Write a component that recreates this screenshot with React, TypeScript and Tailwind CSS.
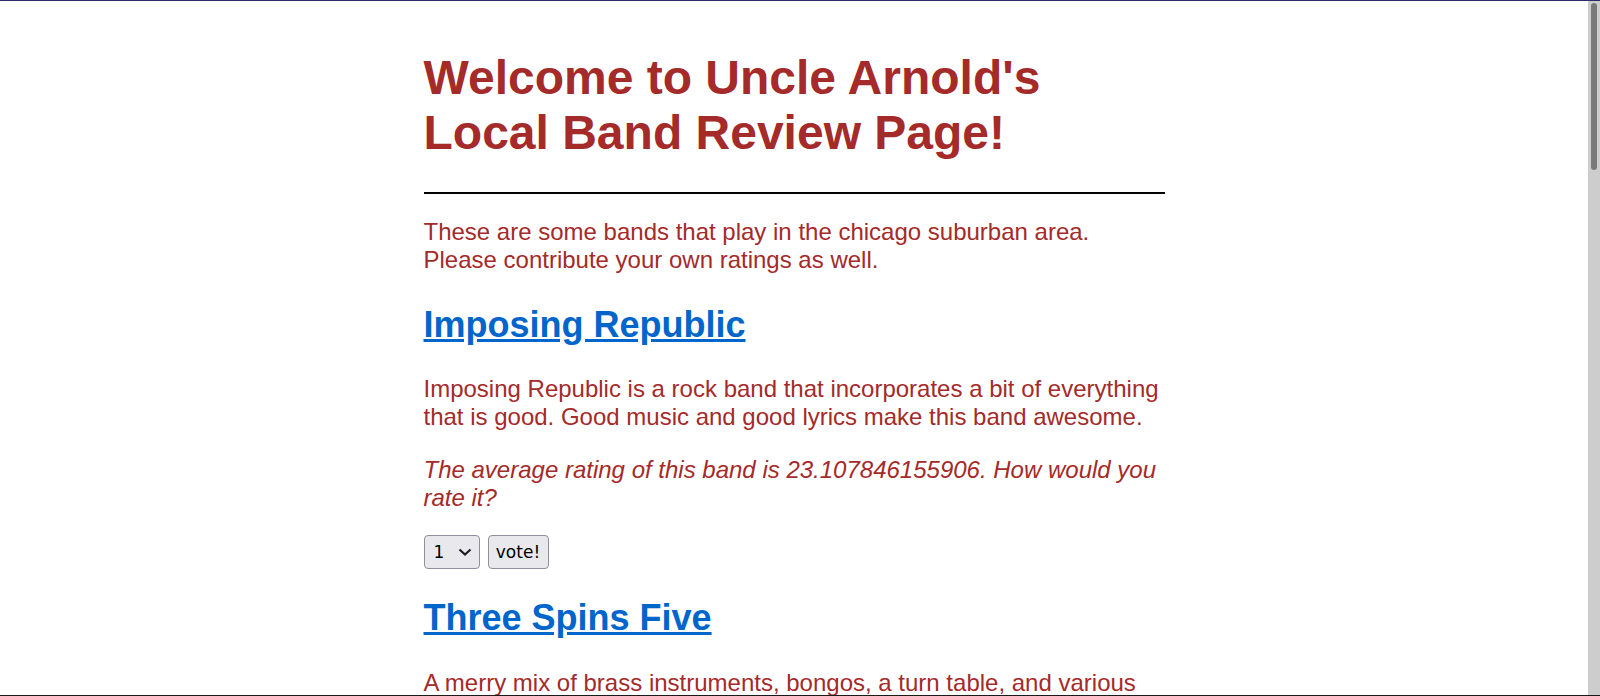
const bands = [
  {
    name: "Imposing Republic",
    about:
      "Imposing Republic is a rock band that incorporates a bit of everything that is good. Good music and good lyrics make this band awesome.",
    rating: "23.107846155906",
  },
  {
    name: "Three Spins Five",
    about:
      "A merry mix of brass instruments, bongos, a turn table, and various other odds and ends come together to make one very unique sound.",
    rating: "4.5833333333333",
  },
  {
    name: "The Lakeshore Drifters",
    about:
      "Folk and bluegrass from the north shore. Banjos, fiddles and a washboard that never seems to quit.",
    rating: "7.2142857142857",
  },
  {
    name: "Naperville Noise Machine",
    about:
      "Loud guitars and louder drums. If you like your ears ringing for a day or two, go see these guys live.",
    rating: "5.9166666666667",
  },
  {
    name: "Sunday Brunch Quartet",
    about:
      "Smooth jazz standards played at just the right volume for a long lazy morning with good coffee.",
    rating: "8.0714285714286",
  },
  {
    name: "Metra Delay",
    about:
      "A punk trio that writes songs about waiting for the train. Short, fast and surprisingly catchy.",
    rating: "6.3529411764706",
  },
  {
    name: "Prairie Static",
    about:
      "Electronic beats mixed with old radio recordings. Strange at first, but it grows on you quickly.",
    rating: "5.1111111111111",
  },
  {
    name: "The Oak Brook Ramblers",
    about:
      "Classic country covers and a few originals. Great for a summer night at the local street fest.",
    rating: "7.6470588235294",
  },
  {
    name: "Cul-de-sac Kings",
    about:
      "Suburban hip hop with clever rhymes and a live bass player. One of the best shows around town.",
    rating: "8.4285714285714",
  },
];

function Band({
  name,
  about,
  rating,
  first,
}: {
  name: string;
  about: string;
  rating: string;
  first: boolean;
}) {
  return (
    <section className={first ? "mt-[30px]" : "mt-[28px]"}>
      <h2 className="text-[36px] leading-[1.15] font-bold">
        <a href="#" className="text-[#0066cc] underline">
          {name}
        </a>
      </h2>
      <p className="mt-[30px]">{about}</p>
      <p className="mt-[26px] italic">
        The average rating of this band is {rating}. How would you rate it?
      </p>
      <form className="mt-[24px] flex gap-[8px] font-['DejaVu_Sans',sans-serif] text-[17px] leading-[1.15] text-black">
        <div className="relative">
          <select className="appearance-none w-[56px] h-[34px] pl-[9px] bg-[#e9e9ed] border border-[#8f8f9d] rounded-[4px]">
            {[1, 2, 3, 4, 5, 6, 7, 8, 9, 10].map((n) => (
              <option key={n}>{n}</option>
            ))}
          </select>
          <svg
            className="pointer-events-none absolute right-[8px] top-[13px]"
            width="14"
            height="8"
            viewBox="0 0 14 8"
            fill="none"
          >
            <path d="M1.5 1.5 L7 6.5 L12.5 1.5" stroke="#1c1b22" strokeWidth="2.2" />
          </svg>
        </div>
        <button
          type="button"
          className="w-[61px] h-[34px] bg-[#e9e9ed] border border-[#8f8f9d] rounded-[4px]"
        >
          vote!
        </button>
      </form>
    </section>
  );
}

export default function App() {
  return (
    <div className="min-h-screen bg-white pr-[12px] font-['Liberation_Sans',Arial,sans-serif] text-[24px] leading-[1.15] text-[#a52a2a]">
      {/* window frame lines and scrollbar */}
      <div className="fixed top-0 left-0 right-0 h-px bg-[#2e2a6b] z-10" />
      <div className="fixed bottom-0 left-0 right-0 h-px bg-[#1a1a1a] z-10" />
      <div className="fixed top-0 bottom-0 right-0 w-[12px] bg-[#cdcdcd]">
        <div className="mt-[3px] ml-[3px] w-[6px] h-[167px] rounded-full bg-[#7a7a7a]" />
      </div>

      <main className="w-[741px] mx-auto pt-[50px] pb-[8px]">
        <h1 className="text-[48px] leading-[1.15] font-bold">
          Welcome to Uncle Arnold's Local Band Review Page!
        </h1>
        <hr className="mt-[32px] border-t-2 border-black" />
        <p className="mt-[24px]">
          These are some bands that play in the chicago suburban area. Please contribute your own
          ratings as well.
        </p>
        {bands.map((b, i) => (
          <Band key={b.name} {...b} first={i === 0} />
        ))}
      </main>
    </div>
  );
}
